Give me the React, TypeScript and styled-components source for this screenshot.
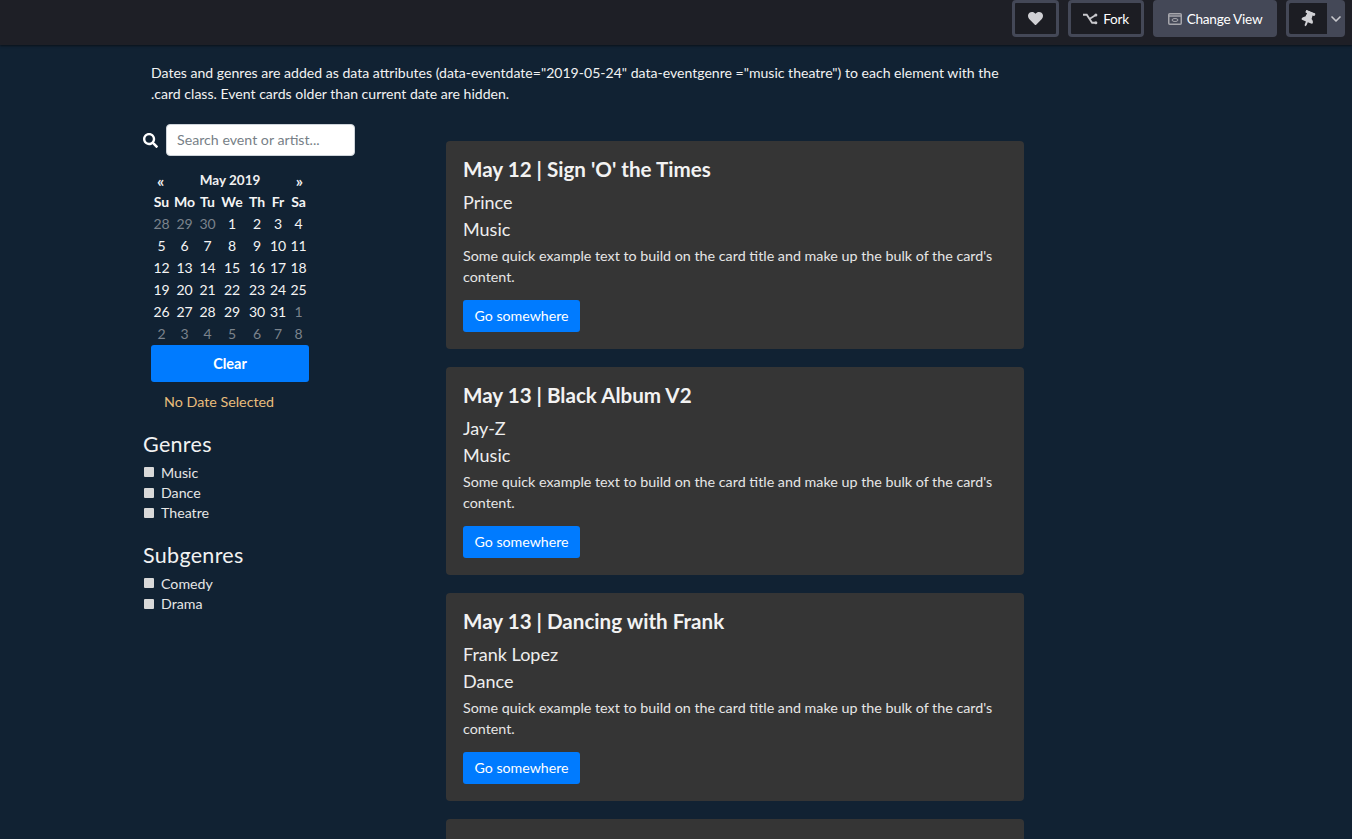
import styled, { createGlobalStyle } from 'styled-components'
import { FaHeart, FaSearch, FaThumbtack } from 'react-icons/fa'
import { ChevronDown } from 'lucide-react'

const GlobalStyle = createGlobalStyle`
  html, body {
    margin: 0;
    height: 100%;
    overflow: hidden;
    background: #112233;
  }
  * {
    box-sizing: border-box;
  }
  body {
    font-family: 'Lato', 'Open Sans', sans-serif;
    color: #f0f0f0;
  }
`

const TopBar = styled.header`
  height: 45px;
  display: flex;
  justify-content: flex-end;
  align-items: flex-start;
  gap: 9px;
  padding: 0 7px 0 0;
  background: #1e1f26;
  box-shadow: 0 1px 2px rgba(0, 0, 0, 0.5);
`

const BarButton = styled.div<{ $filled?: boolean }>`
  height: 37px;
  display: flex;
  align-items: center;
  justify-content: center;
  gap: 5px;
  border: 3px solid #444857;
  border-radius: 4px;
  background: ${(p) => (p.$filled ? '#444857' : '#1c1d23')};
  color: #fff;
  font-size: 13.6px;
  letter-spacing: -0.25px;
`

const HeartButton = styled(BarButton)`
  width: 47px;
  svg {
    color: #d0d0d4;
  }
`

const ForkButton = styled(BarButton)`
  width: 76px;
`

const ViewButton = styled(BarButton)`
  width: 124px;
`

const PinGroup = styled.div`
  width: 59px;
  height: 37px;
  display: flex;
  border-radius: 4px;
  background: #444857;
  padding: 3px 0 3px 3px;
`

const PinCell = styled.div`
  width: 38px;
  display: flex;
  align-items: center;
  justify-content: center;
  background: #1c1d23;
  color: #d0d0d4;
  border-radius: 2px 0 0 2px;
  svg {
    transform: rotate(22deg);
  }
`

const ChevronCell = styled.div`
  flex: 1;
  display: flex;
  align-items: center;
  justify-content: center;
  color: #c8c8cc;
`

const Content = styled.main`
  padding: 18px 0 0 143px;
  width: 1024px;
`

const Intro = styled.p`
  margin: 0 0 0 8px;
  font-size: 14.07px;
  line-height: 20.5px;
  color: #f2f2f2;
`

const Columns = styled.div`
  display: grid;
  grid-template-columns: 303px 578px;
  margin-top: 20px;
`

const Sidebar = styled.aside`
  display: flex;
  flex-direction: column;
`

const SearchRow = styled.div`
  display: flex;
  align-items: center;
  gap: 8px;
  color: #fff;
`

const SearchInput = styled.input`
  width: 189px;
  height: 32px;
  padding: 0 10px 2px;
  border: 1px solid #ced4da;
  border-radius: 4px;
  background: #fff;
  font: 14.2px 'Lato', sans-serif;
  &::placeholder {
    color: #777f87;
    opacity: 1;
  }
`

const Calendar = styled.div`
  width: 158px;
  margin: 13px 0 0 8px;
`

const CalendarHead = styled.div`
  display: flex;
  justify-content: space-between;
  height: 22px;
  align-items: center;
  padding: 0 6px;
  font-size: 13.5px;
  font-weight: 700;
`

const HeadArrow = styled.span`
  font-size: 16px;
`

const DayGrid = styled.div`
  display: grid;
  grid-template-columns: 21px 25px 21px 28px 22px 20px 21px;
  grid-auto-rows: 22px;
  margin-top: -1px;
`

const DayCell = styled.span<{ $muted?: boolean; $head?: boolean }>`
  display: flex;
  align-items: center;
  justify-content: center;
  font-size: 14px;
  font-weight: ${(p) => (p.$head ? 700 : 400)};
  color: ${(p) => (p.$muted ? '#7b838c' : '#f4f4f4')};
`

const ClearButton = styled.div`
  width: 158px;
  height: 37px;
  margin: 1px 0 0 8px;
  display: flex;
  align-items: center;
  justify-content: center;
  border-radius: 3px;
  background: #007bff;
  color: #fff;
  font-size: 14.5px;
  font-weight: 700;
`

const DateNote = styled.div`
  margin: 11px 0 0 21px;
  font-size: 14.3px;
  line-height: 18px;
  color: #e8bd7c;
`

const FilterGroup = styled.section`
  margin-top: 20px;
  & + & {
    margin-top: 19px;
  }
`

const FilterTitle = styled.h4`
  margin: 0 0 5px;
  font-size: 21.5px;
  line-height: 26px;
  font-weight: 400;
  letter-spacing: 0.3px;
  color: #f2f2f2;
`

const FilterItem = styled.label`
  display: flex;
  align-items: center;
  height: 20.4px;
  margin-left: 1px;
  gap: 7px;
  font-size: 14.2px;
  color: #e6e6e6;
`

const Box = styled.span`
  width: 10px;
  height: 10px;
  border-radius: 1px;
  background: #d9d9d9;
`

const Cards = styled.div`
  display: flex;
  flex-direction: column;
  gap: 18px;
  margin-top: 17px;
`

const Card = styled.article`
  height: 208px;
  padding: 16px 17px;
  border-radius: 4px;
  background: #353535;
  flex-shrink: 0;
`

const CardTitle = styled.h5`
  margin: 0 0 7px;
  font-size: 20.6px;
  line-height: 25px;
  font-weight: 700;
  color: #f2f2f2;
`

const CardLine = styled.div`
  font-size: 18px;
  line-height: 27px;
  color: #eee;
`

const CardText = styled.p`
  margin: 3px 0 13px;
  font-size: 14.3px;
  line-height: 20.5px;
  color: #e6e6e6;
`

const GoButton = styled.div`
  width: 117px;
  height: 32px;
  padding-bottom: 1px;
  display: flex;
  align-items: center;
  justify-content: center;
  border-radius: 3px;
  background: #007bff;
  color: #fff;
  font-size: 14.2px;
`

const weeks = [
  ['28', '29', '30', '1', '2', '3', '4'],
  ['5', '6', '7', '8', '9', '10', '11'],
  ['12', '13', '14', '15', '16', '17', '18'],
  ['19', '20', '21', '22', '23', '24', '25'],
  ['26', '27', '28', '29', '30', '31', '1'],
  ['2', '3', '4', '5', '6', '7', '8'],
]

const dayNames = ['Su', 'Mo', 'Tu', 'We', 'Th', 'Fr', 'Sa']

const events = [
  { title: "May 12 | Sign 'O' the Times", artist: 'Prince', genre: 'Music' },
  { title: 'May 13 | Black Album V2', artist: 'Jay-Z', genre: 'Music' },
  { title: 'May 13 | Dancing with Frank', artist: 'Frank Lopez', genre: 'Dance' },
]

function isMuted(week: number, value: string) {
  const day = Number(value)
  return (week === 0 && day > 20) || (week >= 4 && day < 10)
}

function ForkIcon() {
  return (
    <svg width="15" height="12" viewBox="0 0 14 11" fill="none" stroke="#c8c8cc" strokeWidth="1.7">
      <path d="M0 1.5h3.5l5 7.5h3" />
      <path d="M6 5.5l5.5-3.5" />
      <circle cx="12" cy="1.8" r="1.4" fill="#c8c8cc" stroke="none" />
      <circle cx="12" cy="9" r="1.4" fill="#c8c8cc" stroke="none" />
    </svg>
  )
}

function ViewIcon() {
  return (
    <svg width="14" height="12" viewBox="0 0 14 12" fill="none" stroke="#a6a6ac" strokeWidth="1.5">
      <rect x="0.75" y="0.75" width="12.5" height="10.5" rx="1" />
      <path d="M1 3h12" />
      <ellipse cx="7" cy="7" rx="3" ry="1.5" strokeWidth="1" />
    </svg>
  )
}

function Filter({ title, items }: { title: string; items: string[] }) {
  return (
    <FilterGroup>
      <FilterTitle>{title}</FilterTitle>
      {items.map((item) => (
        <FilterItem key={item}>
          <Box />
          {item}
        </FilterItem>
      ))}
    </FilterGroup>
  )
}

export default function App() {
  return (
    <>
      <GlobalStyle />
      <TopBar>
        <HeartButton>
          <FaHeart size={15} />
        </HeartButton>
        <ForkButton>
          <ForkIcon />
          Fork
        </ForkButton>
        <ViewButton $filled>
          <ViewIcon />
          Change View
        </ViewButton>
        <PinGroup>
          <PinCell>
            <FaThumbtack size={16} />
          </PinCell>
          <ChevronCell>
            <ChevronDown size={16} strokeWidth={2.5} />
          </ChevronCell>
        </PinGroup>
      </TopBar>
      <Content>
        <Intro>
          Dates and genres are added as data attributes (data-eventdate="2019-05-24" data-eventgenre ="music theatre") to each element with the .card class. Event cards older than current date are hidden.
        </Intro>
        <Columns>
          <Sidebar>
            <SearchRow>
              <FaSearch size={15} />
              <SearchInput placeholder="Search event or artist..." readOnly />
            </SearchRow>
            <Calendar>
              <CalendarHead>
                <HeadArrow>«</HeadArrow>
                <span>May 2019</span>
                <HeadArrow>»</HeadArrow>
              </CalendarHead>
              <DayGrid>
                {dayNames.map((name) => (
                  <DayCell key={name} $head>
                    {name}
                  </DayCell>
                ))}
                {weeks.map((week, w) =>
                  week.map((day, d) => (
                    <DayCell key={`${w}-${d}`} $muted={isMuted(w, day)}>
                      {day}
                    </DayCell>
                  )),
                )}
              </DayGrid>
            </Calendar>
            <ClearButton>Clear</ClearButton>
            <DateNote>No Date Selected</DateNote>
            <Filter title="Genres" items={['Music', 'Dance', 'Theatre']} />
            <Filter title="Subgenres" items={['Comedy', 'Drama']} />
          </Sidebar>
          <Cards>
            {events.map((event) => (
              <Card key={event.title}>
                <CardTitle>{event.title}</CardTitle>
                <CardLine>{event.artist}</CardLine>
                <CardLine>{event.genre}</CardLine>
                <CardText>
                  Some quick example text to build on the card title and make up the bulk of the card's content.
                </CardText>
                <GoButton>Go somewhere</GoButton>
              </Card>
            ))}
            <Card />
          </Cards>
        </Columns>
      </Content>
    </>
  )
}
